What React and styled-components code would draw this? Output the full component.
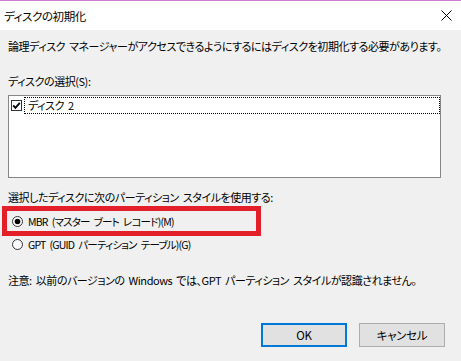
import React from "react";
import styled, { createGlobalStyle } from "styled-components";

const GlobalStyle = createGlobalStyle`
  html, body {
    margin: 0;
    padding: 0;
    background: #f0f0f0;
  }
  body {
    font-family: "Noto Sans CJK JP", "Noto Sans", sans-serif;
    font-size: 11px;
    letter-spacing: -0.45px;
    word-spacing: 2px;
    color: #000;
    font-feature-settings: "palt";
  }
`;

const Window = styled.div`
  width: 461px;
  height: 361px;
  display: flex;
  flex-direction: column;
  border-top: 1px solid #cf7fd0;
  box-sizing: border-box;
  background: #f0f0f0;
  overflow: hidden;
`;

const TitleBar = styled.div`
  height: 29px;
  background: #ffffff;
  display: flex;
  align-items: center;
  justify-content: space-between;
  padding: 0 9px 0 4px;
  font-size: 11.5px;
  letter-spacing: -0.4px;
`;

const Body = styled.div`
  flex: 1;
  display: flex;
  flex-direction: column;
  padding: 8px 16px 0 8px;
`;

const Text = styled.div`
  line-height: 16px;
  height: 16px;
  white-space: nowrap;
  margin-top: ${(p) => p.$gap || 0}px;
`;

const ListBox = styled.div`
  margin-top: 6px;
  width: 433px;
  height: 83px;
  box-sizing: border-box;
  border: 1px solid #868686;
  background: #fff;
  padding: 1px 0 0 2px;
`;

const ListItem = styled.div`
  display: flex;
  align-items: center;
  height: 17px;
`;

const ItemLabel = styled.div`
  flex: 1;
  height: 17px;
  box-sizing: border-box;
  border: 1px dotted #000;
  line-height: 15px;
  padding-left: 3px;
  margin-left: 2px;
`;

const RadioRow = styled.div`
  display: flex;
  align-items: center;
  gap: 5px;
  box-sizing: border-box;
  height: ${(p) => (p.$highlight ? 30 : 16)}px;
  width: ${(p) => (p.$highlight ? "259px" : "auto")};
  margin-left: ${(p) => (p.$highlight ? -6 : 0)}px;
  padding-left: ${(p) => (p.$highlight ? 5 : 4)}px;
  border: ${(p) => (p.$highlight ? "5px solid #e3202a" : "none")};
  margin-top: ${(p) => p.$gap || 0}px;
  white-space: nowrap;
`;

const RadioLabel = styled.span`
  font-size: 10.5px;
  letter-spacing: -0.8px;
  word-spacing: 2.5px;
`;

const ButtonRow = styled.div`
  margin-top: 35px;
  display: flex;
  justify-content: flex-end;
  gap: 12px;
`;

const Button = styled.button`
  width: 86px;
  height: 24px;
  box-sizing: border-box;
  background: #e1e1e1;
  border: ${(p) => (p.$primary ? "2px solid #0078d7" : "1px solid #adadad")};
  font: inherit;
  font-size: 11.5px;
  letter-spacing: -0.3px;
  color: #000;
  padding: 0;
`;

const CloseIcon = () => (
  <svg width="11" height="11" viewBox="0 0 11 11">
    <path d="M0.5 0.5 L10.5 10.5 M10.5 0.5 L0.5 10.5" stroke="#000" strokeWidth="1" />
  </svg>
);

const CheckBox = () => (
  <svg width="11" height="11" viewBox="0 0 11 11">
    <rect x="0.5" y="0.5" width="10" height="10" fill="#fff" stroke="#333" />
    <path d="M2.2 5.4 L4.4 7.8 L8.8 2.8" fill="none" stroke="#000" strokeWidth="1.8" />
  </svg>
);

const Radio = ({ checked }) => (
  <svg width="11" height="11" viewBox="0 0 11 11">
    <circle cx="5.5" cy="5.5" r="5" fill="#fff" stroke="#333" />
    {checked && <circle cx="5.5" cy="5.5" r="2.8" fill="#000" />}
  </svg>
);

export default function App() {
  return (
    <>
      <GlobalStyle />
      <Window>
        <TitleBar>
          <span>ディスクの初期化</span>
          <CloseIcon />
        </TitleBar>
        <Body>
          <Text>
            論理ディスク マネージャーがアクセスできるようにするにはディスクを初期化する必要があります。
          </Text>
          <Text $gap={19}>ディスクの選択(S):</Text>
          <ListBox>
            <ListItem>
              <CheckBox />
              <ItemLabel>ディスク 2</ItemLabel>
            </ListItem>
          </ListBox>
          <Text $gap={11}>選択したディスクに次のパーティション スタイルを使用する:</Text>
          <RadioRow $highlight $gap={1}>
            <Radio checked />
            <RadioLabel>MBR (マスター ブート レコード)(M)</RadioLabel>
          </RadioRow>
          <RadioRow>
            <Radio />
            <RadioLabel>GPT (GUID パーティション テーブル)(G)</RadioLabel>
          </RadioRow>
          <Text $gap={20}>
            注意: 以前のバージョンの Windows では、GPT パーティション スタイルが認識されません。
          </Text>
          <ButtonRow>
            <Button $primary>OK</Button>
            <Button>キャンセル</Button>
          </ButtonRow>
        </Body>
      </Window>
    </>
  );
}
